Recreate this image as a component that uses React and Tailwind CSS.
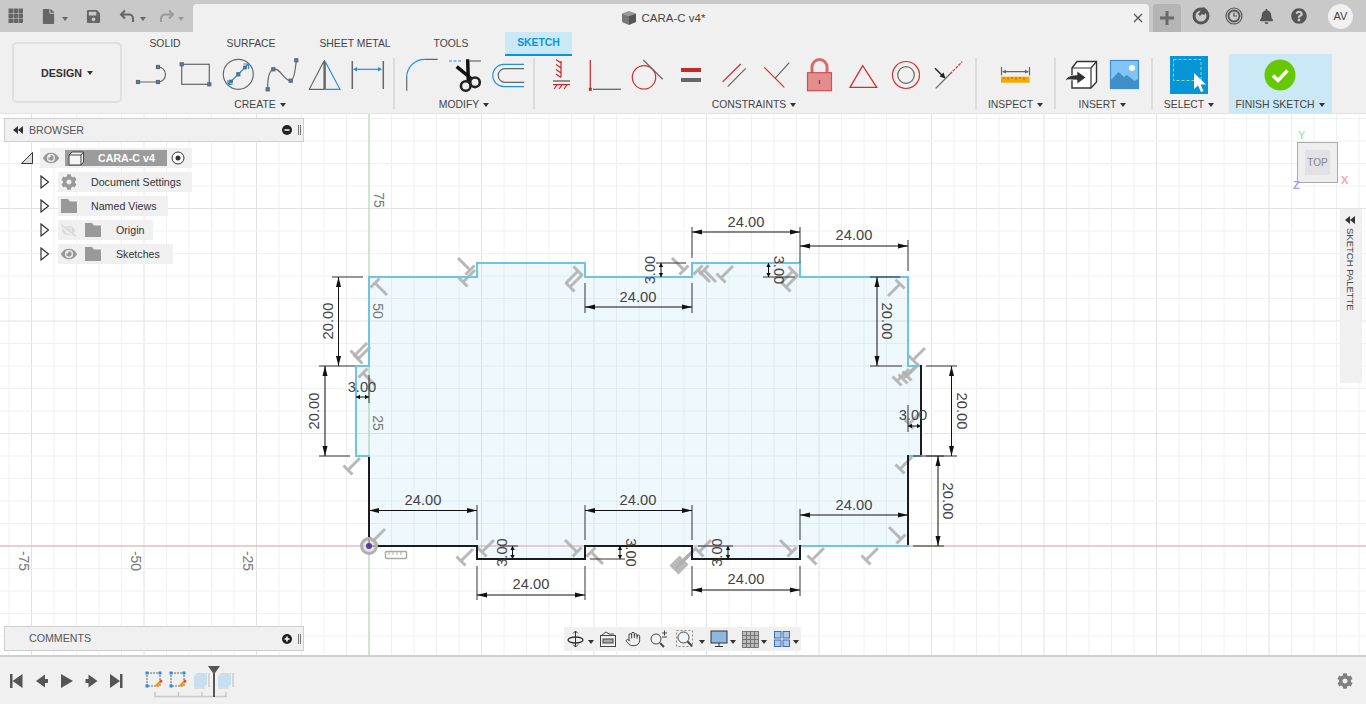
import { Hand } from 'lucide-react'
import { FaBell, FaCog, FaEye, FaEyeSlash, FaFile, FaQuestionCircle, FaSave } from 'react-icons/fa'

const Caret = ({ color = 'border-t-[#333]' }) => (
  <span className={`inline-block w-0 h-0 border-x-[3.5px] border-t-[4px] border-x-transparent ${color}`} />
)

const Dot = ({ x, y, s = 3 }) => <rect x={x - s / 2} y={y - s / 2} width={s} height={s} fill="#1e90e6" />

// toolbar icons, one 43x36 cell each
const Cell = ({ children }) => (
  <svg width="43" height="36" viewBox="0 0 43 36" fill="none" strokeWidth="1.2" stroke="#666" className="shrink-0">
    {children}
  </svg>
)

const createIcons = [
  <><path d="M7 25H27A7.5 7.5 0 0 0 27 10" /><Dot x={7} y={25} /><Dot x={27} y={25} /><Dot x={27} y={10} /></>,
  <><rect x="7.7" y="7.3" width="27.6" height="20" /><Dot x={7.7} y={7.3} /><Dot x={35.3} y={27.3} /></>,
  <><circle cx="21.3" cy="17.3" r="15" />
    <path d="M11.5 27 31 7.5M11 23v4.5h4.5M31.5 12V7h-5" stroke="#1e90e6" /><Dot x={21.3} y={17.3} /><Dot x={14} y={24.5} s={2.5} /><Dot x={28} y={10.5} s={2.5} /></>,
  <><path d="M7.7 32C7.5 22 9 14 13.3 12.3 20 10 24 24 30.7 23.7 34 23 35.5 12 36.3 3.3" /><Dot x={7.7} y={32.3} /><Dot x={13.3} y={12.3} /><Dot x={30.7} y={23.7} /><Dot x={36.3} y={3.3} /></>,
  <><path d="M21 4 6.3 32.3H21ZM21 4" /><path d="M22.3 4.7 37 32.3H22.3Z" stroke="#1e90e6" /><path d="M21.6 3V32.3" stroke="#666" /></>,
  <><path d="M6.3 4V32M37.3 4V32" strokeWidth="1.5" /><path d="M8 12.3H35" stroke="#1e90e6" /><path d="M7 12.3 11 10V14.6ZM36 12.3 32 10V14.6Z" fill="#1e90e6" stroke="none" /></>,
]

const modifyIcons = [
  <><path d="M6.7 20A18 18 0 0 1 25 2.3" stroke="#1e90e6" /><path d="M25 2.3H37.7M6.7 20V33.7" /></>,
  <><path d="M6 4H18" stroke="#1e90e6" strokeDasharray="3 1.5" /><path d="M27 4H38" />
    <path d="M13.7 9.7 28.7 22M24.7 2.3 25.3 25" stroke="#111" strokeWidth="3.5" />
    <circle cx="22.7" cy="29" r="4.8" stroke="#222" strokeWidth="2.6" /><circle cx="32" cy="25.3" r="4.8" stroke="#222" strokeWidth="2.6" /></>,
  <><path d="M38 7.3H18A11.2 11.2 0 0 0 18 29.7H38" stroke="#1e90e6" /><path d="M38 11.7H19A6.8 6.8 0 0 0 19 25.3H38" /></>,
]

const constraintIcons = [
  <><path d="M22 4V20M22 6 17 2.500M22 11 17 7.500M22 16 17 12.500M22 20.500 17 17" stroke="#c62828" /><path d="M14 24H31" strokeWidth="1.4" /><path d="M14 27.700H31M18 28l-3 4M23 28l-3 4M28 28l-3 4" stroke="#c62828" /></>,
  <><path d="M8.300 3V32" stroke="#c62828" /><path d="M11 32.300H39" strokeWidth="1.300" /><rect x="6.800" y="30.800" width="3" height="3" fill="#c62828" stroke="none" /></>,
  <><circle cx="19" cy="20.300" r="11.700" stroke="#d32f2f" /><path d="M18.300 3 37.700 22.300" /></>,
  <><rect x="13" y="11" width="20" height="4" fill="#c62828" stroke="none" /><rect x="13" y="21" width="20" height="4" fill="#666" stroke="none" /></>,
  <><path d="M11.700 24.700 29.700 7" stroke="#d32f2f" /><path d="M16.700 29.700 34.700 11.300" /></>,
  <><path d="M10.300 10.300 30.300 30.300" stroke="#d32f2f" /><path d="M21 21.300 35.300 5.700" /></>,
  <><path d="M15 16V10A7.500 7.500 0 0 1 30 10V16" stroke="#d86a6a" strokeWidth="3" /><rect x="10.500" y="15.700" width="24" height="18" fill="#e38d8d" stroke="#d05050" /><path d="M22.500 23V27" stroke="#9c3030" /></>,
  <path d="M22.700 8.700 10 30.300H36.700Z" stroke="#d32f2f" strokeWidth="1.300" />,
  <><circle cx="23" cy="18" r="13.500" stroke="#d32f2f" /><circle cx="23" cy="18" r="8.300" /></>,
  <><path d="M9.700 31.300 24 17" /><path d="M24 17 36.300 4.700" stroke="#d32f2f" strokeDasharray="3 1" /><path d="M9 11.300 17 19.300" stroke="#222" strokeWidth="1.500" /><path d="M19.500 21.500 13.500 19.500 17.500 15.500Z" fill="#222" stroke="none" /></>,
]

const inspectIcon = (
  <><path d="M7.500 10V18.500M35.500 10V18.500M9 14.700H34" /><path d="M8 14.700 12 12.800V16.600ZM35 14.700 31 12.800V16.600Z" fill="#666" stroke="none" />
    <rect x="7" y="19.700" width="28.500" height="6" fill="#f4a800" stroke="none" /><path d="M10 20V22M14 20V23M18 20V22M22 20V23M26 20V22M30 20V23" stroke="#a06a00" strokeWidth="0.800" /></>
)

const insertIcons = [
  <><path d="M12 11 17 4.500H36.500V25L31 31H12Z" fill="#fff" stroke="#333" strokeWidth="1.400" /><path d="M12 11H31V31M31 11 36.500 4.500" stroke="#333" strokeWidth="1.200" /><path d="M5 23.500C7 19 12 18 17 18V14L26 20.500 17 27V23C12 23 8 22 5 23.500Z" fill="#333" stroke="#fff" strokeWidth="0.700" /></>,
  <><rect x="7.500" y="3.500" width="28" height="28" fill="#82c4f7" stroke="#3a8fd0" /><circle cx="29" cy="11" r="3" fill="#fdf8d0" stroke="none" /><path d="M8 31V23L15.500 15 21 20 24 18 31.500 24 35 22V31Z" fill="#408fc9" stroke="none" /></>,
]

const Group = ({ label, className = '', children }) => (
  <div className={`flex flex-col items-center h-[57px] shrink-0 ${className}`}>
    <div className="flex h-[36px] mt-px">{children}</div>
    <div className="mt-[6px] flex items-center gap-[4px] text-[10.4px] leading-[11px] text-[#444]">
      {label}
      <Caret />
    </div>
  </div>
)

const Divider = () => <div className="w-[2px] h-[51px] mt-[2px] bg-[#dcdcdc] shrink-0" />

const Tab = ({ className, children }) => (
  <div className={`h-[24px] flex items-center justify-center text-[10.4px] text-[#444] ${className}`}>{children}</div>
)

function TopBar() {
  return (
    <div className="h-[32px] flex bg-[#c9c9c9] shrink-0">
      <div className="w-[193px] flex items-center text-[#666] shrink-0">
        <svg width="16" height="16" viewBox="0 0 16 16" fill="#666" className="ml-[8px]">
          {[1, 6, 11].flatMap((y) => [1, 6, 11].map((x) => <rect key={`${x}-${y}`} x={x - 0.5} y={y - 0.5} width="4.500" height="4.500" rx="0.500" />))}
        </svg>
        <FaFile size={15} className="ml-[17px]" />
        <span className="ml-[6px]"><Caret color="border-t-[#666]" /></span>
        <FaSave size={15} className="ml-[18px]" />
        <svg width="16" height="16" viewBox="0 0 16 16" fill="none" stroke="#666" strokeWidth="2" className="ml-[18px]">
          <path d="M6 2.500 2 6.500 6 10.500M2 6.500H10A4 4 0 0 1 14 10.500V14" />
        </svg>
        <span className="ml-[5px]"><Caret color="border-t-[#666]" /></span>
        <svg width="16" height="16" viewBox="0 0 16 16" fill="none" stroke="#9a9a9a" strokeWidth="2" className="ml-[13px]">
          <path d="M10 2.500 14 6.500 10 10.500M14 6.500H6A4 4 0 0 0 2 10.500V14" />
        </svg>
        <span className="ml-[3px]"><Caret color="border-t-[#999]" /></span>
      </div>
      <div className="relative mt-[4px] w-[956px] h-[28px] bg-[#f0f0f0] rounded-t-[4px] flex items-center justify-center gap-[5px] pr-[16px] shrink-0 text-[11.5px] text-[#444]">
        <svg width="16" height="16" viewBox="0 0 16 16">
          <path d="M1 3.500 8 1 15 3.500 8 6Z" fill="#999" />
          <path d="M1 3.500V12L8 15V6Z" fill="#777" />
          <path d="M15 3.500V12L8 15V6Z" fill="#555" />
        </svg>
        <span className="pt-px">CARA-C v4*</span>
        <svg width="10" height="10" viewBox="0 0 10 10" stroke="#555" strokeWidth="1.300" className="absolute right-[6px] top-[9px]">
          <path d="M1 1 9 9M9 1 1 9" />
        </svg>
      </div>
      <div className="ml-[4px] mt-[4px] w-[28px] h-[28px] bg-[#b5b5b5] rounded-t-[3px] flex items-center justify-center shrink-0">
        <svg width="14" height="14" viewBox="0 0 14 14" fill="#6a6a6a"><path d="M5.500 0h3v5.500H14v3H8.500V14h-3V8.500H0v-3h5.500Z" /></svg>
      </div>
      <div className="flex items-center ml-[11px] text-[#555]">
        <svg width="18" height="18" viewBox="0 0 18 18" className="shrink-0">
          <circle cx="9" cy="9" r="7" fill="none" stroke="#555" strokeWidth="3" />
          <path d="M9 2 12 0 16 4 12 8 10 7 8 9 6 7 8 5Z" fill="#555" />
        </svg>
        <svg width="18" height="18" viewBox="0 0 18 18" fill="none" stroke="#555" className="ml-[15px] shrink-0">
          <circle cx="9" cy="9" r="8" strokeWidth="1.200" />
          <circle cx="9" cy="9" r="5.500" strokeWidth="1.800" />
          <path d="M9 5.500V9H12" strokeWidth="1.200" />
        </svg>
        <FaBell size={15} className="ml-[16px]" />
        <FaQuestionCircle size={16} className="ml-[17px]" />
        <div className="ml-[21px] w-[25px] h-[25px] rounded-full bg-[#f0f0f0] flex items-center justify-center text-[11px] text-[#444]">AV</div>
      </div>
    </div>
  )
}

function Toolbar() {
  return (
    <div className="h-[82px] flex bg-[#f0f0f0] border-b border-[#e2e2e2] shrink-0">
      <div className="w-[131px] shrink-0 pl-[12px] pt-[10px]">
        <div className="w-[110px] h-[61px] border-2 border-[#dfdfdf] rounded-[5px] flex items-center justify-center gap-[5px] text-[10.67px] font-bold text-[#333]">
          DESIGN <Caret />
        </div>
      </div>
      <div className="w-[1098px] shrink-0 flex flex-col">
        <div className="flex -ml-[9px]">
          <Tab className="w-[86px]">SOLID</Tab>
          <Tab className="w-[86px]">SURFACE</Tab>
          <Tab className="w-[122px]">SHEET METAL</Tab>
          <Tab className="w-[70px]">TOOLS</Tab>
          <Tab className="ml-[19px] w-[67px] bg-[#cbe8f6] border-b-2 border-[#0696d7] text-[#0696d7] font-bold">SKETCH</Tab>
        </div>
        <div className="flex">
          <Group label="CREATE" className="w-[258px] mr-[4px]">
            {createIcons.map((icon, i) => <Cell key={i}>{icon}</Cell>)}
          </Group>
          <Divider />
          <Group label="MODIFY" className="w-[138px]">
            {modifyIcons.map((icon, i) => <Cell key={i}>{icon}</Cell>)}
          </Group>
          <Divider />
          <Group label="CONSTRAINTS" className="w-[438px] mr-[2px]">
            {constraintIcons.map((icon, i) => <Cell key={i}>{icon}</Cell>)}
          </Group>
          <Divider />
          <Group label="INSPECT" className="w-[77px]"><Cell>{inspectIcon}</Cell></Group>
          <Divider />
          <Group label="INSERT" className="w-[93px] mr-[2px]">
            {insertIcons.map((icon, i) => <Cell key={i}>{icon}</Cell>)}
          </Group>
          <Divider />
          <Group label="SELECT" className="w-[72px]">
            <svg width="38" height="38" viewBox="0 0 38 38" className="-mt-px shrink-0">
              <rect width="38" height="38" fill="#0696d7" />
              <rect x="3.500" y="3.500" width="27.500" height="21" fill="none" stroke="#8fe08f" strokeDasharray="3 2" />
              <path d="M24 17V33L28 29.500 31 36 33.500 35 30.500 28.500H36Z" fill="#fff" />
            </svg>
          </Group>
        </div>
      </div>
      <div className="w-[103px] h-[59px] mt-[22px] pr-px bg-[#cbe8f6] flex flex-col items-center shrink-0">
        <svg width="32" height="32" viewBox="0 0 32 32" className="mt-[5px] shrink-0">
          <circle cx="16" cy="16" r="15.500" fill="#66c800" />
          <path d="M9 16.500 14 21.500 23.500 11.500" fill="none" stroke="#fff" strokeWidth="3.500" />
        </svg>
        <div className="mt-[8px] flex items-center gap-[4px] text-[10.4px] leading-[11px] text-[#444]">
          FINISH SKETCH <Caret />
        </div>
      </div>
    </div>
  )
}

const FolderIcon = ({ className = '' }) => (
  <svg width="16" height="14" viewBox="0 0 16 14" fill="#999" className={`shrink-0 ${className}`}>
    <path d="M0 0H7L9 2.500H16V14H0Z" />
  </svg>
)

const TreeArrow = () => (
  <svg width="10" height="14" viewBox="0 0 10 14" fill="none" stroke="#333" strokeWidth="1.200" className="shrink-0 ml-[36px] mr-[8px]">
    <path d="M1 1 8.500 7 1 13Z" />
  </svg>
)

const TreeRow = ({ width, children }) => (
  <div className="flex items-center h-[20px]">
    <TreeArrow />
    <div className={`flex items-center h-[20px] bg-[#f0f0f0] text-[10.67px] text-[#333] ${width}`}>{children}</div>
  </div>
)

function BrowserPanel() {
  return (
    <div className="absolute left-[4px] top-[4px] w-[300px]">
      <div className="h-[24px] bg-[#f0f0f0] border border-[#cfcfcf] flex items-center text-[10.67px] text-[#555]">
        <span className="w-[24px] flex justify-center pl-[2px]">
          <svg width="10" height="8" viewBox="0 0 10 8" fill="#333"><path d="M5 0V8L0 4ZM10 0V8L5 4Z" /></svg>
        </span>
        BROWSER
        <svg width="10" height="10" viewBox="0 0 10 10" className="ml-auto"><circle cx="5" cy="5" r="5" fill="#222" /><path d="M2.500 5H7.500" stroke="#fff" strokeWidth="1.500" /></svg>
        <span className="ml-[6px] mr-[2px] w-[3px] h-[10px] border-x border-[#777]" />
      </div>
      <div className="mt-[6px] flex flex-col gap-[4px]">
        <div className="flex items-center h-[20px]">
          <svg width="12" height="12" viewBox="0 0 12 12" className="ml-[17px] mr-[7px] shrink-0">
            <path d="M0.500 11.500 11.500 0.500V11.500Z" fill="#ddd" stroke="#333" />
          </svg>
          <div className="w-[152px] h-[20px] bg-[#f0f0f0] flex items-center">
            <FaEye size={16} className="ml-[3px] text-[#999] shrink-0" />
            <div className="ml-[6px] w-[102px] h-[16px] bg-[#9b9b9b] flex items-center">
              <svg width="17" height="15" viewBox="0 0 17 15" className="ml-[3px] shrink-0">
                <path d="M1 4 4 1H15.500V11L13 14H1Z" fill="#f4f4f4" stroke="#444" />
                <path d="M1 4H13V14M13 4 15.500 1" fill="none" stroke="#444" />
              </svg>
              <span className="ml-[13px] text-[10.67px] font-bold text-white whitespace-nowrap">CARA-C v4</span>
            </div>
            <svg width="14" height="14" viewBox="0 0 14 14" className="ml-[4px] shrink-0">
              <circle cx="7" cy="7" r="6" fill="#fff" stroke="#333" />
              <circle cx="7" cy="7" r="2.500" fill="#333" />
            </svg>
          </div>
        </div>
        <TreeRow width="w-[134px]">
          <FaCog size={16} className="ml-[3px] text-[#999] shrink-0" />
          <span className="ml-[14px]">Document Settings</span>
        </TreeRow>
        <TreeRow width="w-[110px]">
          <FolderIcon className="ml-[3px]" />
          <span className="ml-[14px]">Named Views</span>
        </TreeRow>
        <TreeRow width="w-[95px]">
          <FaEyeSlash size={15} className="ml-[3px] text-[#d8d8d8] shrink-0" />
          <FolderIcon className="ml-[9px]" />
          <span className="ml-[15px]">Origin</span>
        </TreeRow>
        <TreeRow width="w-[115px]">
          <FaEye size={16} className="ml-[3px] text-[#999] shrink-0" />
          <FolderIcon className="ml-[8px]" />
          <span className="ml-[15px]">Sketches</span>
        </TreeRow>
      </div>
    </div>
  )
}

function CommentsPanel() {
  return (
    <div className="absolute left-[4px] top-[512px] w-[300px] h-[25px] bg-[#f0f0f0] border border-[#cfcfcf] flex items-center text-[10.67px] text-[#555]">
      <span className="ml-[24px] pb-px">COMMENTS</span>
      <svg width="10" height="10" viewBox="0 0 10 10" className="ml-auto"><circle cx="5" cy="5" r="5" fill="#222" /><path d="M2.500 5H7.500M5 2.500V7.500" stroke="#fff" strokeWidth="1.500" /></svg>
      <span className="ml-[6px] mr-[2px] w-[3px] h-[10px] border-x border-[#777]" />
    </div>
  )
}

function NavBar() {
  return (
    <div className="absolute left-[564px] top-[513px] w-[237px] h-[24px] bg-[#f0f0f0] flex items-center pl-[3px] text-[#444]">
      <svg width="17" height="18" viewBox="0 0 17 18" fill="none" stroke="#333" className="shrink-0">
        <path d="M8.500 1V17M6 3.500 8.500 1 11 3.500M6 14.500 8.500 17 11 14.500" />
        <ellipse cx="8.500" cy="10" rx="7.500" ry="3" strokeWidth="1.300" />
      </svg>
      <span className="ml-[4px]"><Caret /></span>
      <svg width="18" height="16" viewBox="0 0 18 16" fill="none" stroke="#444" className="ml-[5px] shrink-0">
        <rect x="1.500" y="4.500" width="15" height="11" />
        <rect x="4" y="8" width="10" height="4" fill="#aaa" />
        <path d="M3 4 7 1 10 3H15" />
      </svg>
      <Hand size={16} strokeWidth={1.400} className="ml-[8px] text-[#333] shrink-0" />
      <svg width="20" height="18" viewBox="0 0 20 18" fill="none" stroke="#444" className="ml-[8px] shrink-0">
        <circle cx="7" cy="9" r="5" fill="#eef6fb" />
        <path d="M11 13 15 17" strokeWidth="2" />
        <path d="M13 3H18M15.500 0.500V5.500M13 7H18" />
      </svg>
      <svg width="18" height="18" viewBox="0 0 18 18" fill="none" stroke="#444" className="ml-[7px] shrink-0">
        <rect x="0.500" y="0.500" width="16" height="16" strokeDasharray="2 2" stroke="#888" />
        <circle cx="7.500" cy="7.500" r="5.500" fill="#eef6fb" />
        <path d="M11.500 11.500 16 16" strokeWidth="2" />
      </svg>
      <span className="ml-[5px]"><Caret /></span>
      <svg width="18" height="18" viewBox="0 0 18 18" className="ml-[5px] shrink-0">
        <rect x="1" y="1" width="16" height="12" fill="#8fb8e0" stroke="#333" />
        <path d="M9 13V16M5 16.500H13" stroke="#333" />
      </svg>
      <span className="ml-[2px]"><Caret /></span>
      <svg width="17" height="17" viewBox="0 0 17 17" fill="#ddd" stroke="#666" strokeWidth="0.800" className="ml-[6px] shrink-0">
        <rect x="0.500" y="0.500" width="16" height="16" fill="#bbb" />
        <path d="M4.500 0V17M8.500 0V17M12.500 0V17M0 4.500H17M0 8.500H17M0 12.500H17" />
      </svg>
      <span className="ml-[2px]"><Caret /></span>
      <svg width="16" height="16" viewBox="0 0 16 16" fill="#a9c8ea" stroke="#3f6fa8" className="ml-[7px] shrink-0">
        <rect x="0.500" y="0.500" width="6.500" height="6.500" /><rect x="9" y="0.500" width="6.500" height="6.500" />
        <rect x="0.500" y="9" width="6.500" height="6.500" /><rect x="9" y="9" width="6.500" height="6.500" />
      </svg>
      <span className="ml-[3px]"><Caret /></span>
    </div>
  )
}

function ViewCube() {
  return (
    <div className="absolute left-[1297px] top-[28px] w-[41px] h-[41px] bg-[#eeeeee] border border-[#aaa] flex items-center justify-center">
      <div className="w-[25px] h-[25px] bg-[#e2e2e6] flex items-center justify-center text-[10px] text-[#85858f]">TOP</div>
      <span className="absolute -top-[14px] left-[0px] text-[11px] leading-[12px] font-bold text-[#a8eca8]">Y</span>
      <span className="absolute top-[31px] left-[43px] text-[11px] leading-[12px] font-bold text-[#f5a8a8]">X</span>
      <span className="absolute top-[36px] -left-[5px] text-[11px] leading-[12px] font-bold text-[#a0a0f0]">Z</span>
    </div>
  )
}

function SketchPalette() {
  return (
    <div className="absolute left-[1340px] top-[95px] w-[22px] h-[174px] bg-[#f0f0f0] flex flex-col items-center pt-[7px] pr-[2px]">
      <svg width="10" height="8" viewBox="0 0 10 8" fill="#333" className="shrink-0"><path d="M5 0V8L0 4ZM10 0V8L5 4Z" /></svg>
      <span className="mt-[4px] [writing-mode:vertical-rl] text-[9.5px] leading-[11px] text-[#444] whitespace-nowrap">SKETCH PALETTE</span>
    </div>
  )
}

const BLUE = '#6fc3e6'
const BLACK = '#1c1c1c'

const outline = [
  [BLACK, 'M369 546V456'],
  [BLUE, 'M369 456H356V366H369V277H477V263H585V277H692V263H800V277H908V366H921'],
  [BLACK, 'M921 366V456'],
  [BLUE, 'M921 456H908'],
  [BLACK, 'M908 456V546'],
  [BLUE, 'M908 546H800'],
  [BLACK, 'M800 546V559H692V546H585V559H477V546H369'],
]

// extension lines of the dimensions
const extLines = [
  [692, 227, 692, 258], [800, 227, 800, 263], [908, 240, 908, 271],
  [692, 283, 692, 313], [585, 283, 585, 313],
  [332, 277, 363, 277], [319, 366, 355, 366], [319, 456, 350, 456],
  [369, 375, 369, 403], [870, 277, 900, 277], [870, 366, 902, 366],
  [926, 366, 957, 366], [926, 456, 957, 456], [913, 456, 944, 456], [913, 546, 944, 546],
  [908, 405, 908, 432], [656, 263, 686, 263], [763, 277, 795, 277],
  [477, 505, 477, 540], [585, 505, 585, 540], [692, 505, 692, 540],
  [800, 509, 800, 540], [477, 566, 477, 600], [585, 566, 585, 600],
  [692, 566, 692, 596], [800, 566, 800, 596],
  [500, 546, 518, 546], [590, 559, 625, 559], [698, 546, 733, 546],
]

// [x1, y1, x2, y2, label x, label y, rotation]
const dimensions = [
  [692, 232, 800, 232, 746, 222, 0],
  [800, 246, 908, 246, 854, 235, 0],
  [585, 307, 692, 307, 638, 297, 0],
  [338.5, 277, 338.5, 366, 328, 321, -90],
  [325, 366, 325, 456, 314, 411, -90],
  [356, 397, 369, 397, 362, 387, 0],
  [877, 277, 877, 366, 887, 321, 90],
  [951.5, 366, 951.5, 456, 962, 411, 90],
  [938, 456, 938, 546, 948, 501, 90],
  [908, 426, 921, 426, 913, 415, 0],
  [661, 263, 661, 277, 650, 270, -90],
  [768.5, 263, 768.5, 277, 779, 270, 90],
  [369, 510.5, 477, 510.5, 423, 500, 0],
  [585, 510.5, 692, 510.5, 638, 500, 0],
  [800, 515, 908, 515, 854, 505, 0],
  [477, 595, 585, 595, 531, 584, 0],
  [692, 590, 800, 590, 746, 579, 0],
  [512.5, 546, 512.5, 559, 502, 552.5, -90],
  [620, 546, 620, 559, 631, 552.5, 90],
  [728, 546, 728, 559, 717, 552.5, -90],
]

const dirs = { NE: [1, -1], NW: [-1, -1], SE: [1, 1], SW: [-1, 1] }

// constraint glyphs: junction x, y and stem direction
const tees = [
  [375, 283, 'SE'], [470, 270, 'NW'], [463, 282, 'NE'], [570, 287, 'NE'], [578, 271, 'SW'],
  [355, 355, 'NE'], [358, 359, 'NE'], [363, 373, 'SE'], [348, 470, 'NE'],
  [684, 270, 'NW'], [698, 270, 'SE'], [704, 270, 'SE'], [721, 278, 'NE'], [786, 287, 'NE'], [793, 271, 'SW'],
  [900, 284, 'SW'], [913, 360, 'NE'], [897, 381, 'NE'], [903, 379, 'NE'], [907, 376, 'NE'], [909, 424, 'NE'],
  [373, 541, 'NE'], [461, 561, 'NE'], [482, 552, 'NE'], [577, 552, 'NW'], [591, 552, 'SE'],
  [675, 569, 'NE'], [677, 567, 'NE'], [679, 565, 'NE'], [681, 563, 'NE'], [683, 561, 'NE'],
  [699, 552, 'NE'], [792, 552, 'NW'], [812, 560, 'NE'], [866, 560, 'NE'], [901, 539, 'NW'], [900, 469, 'NE'],
]

const axisLabels = [
  [379, 200, '75'], [378, 311, '50'], [378, 423, '25'],
  [24, 561, '-75'], [136, 561, '-50'], [248, 561, '-25'],
]

function Arrow({ x, y, dx, dy, len }) {
  const w = len >= 8 ? 2.5 : 2.2
  const px = -dy * w
  const py = dx * w
  return <path d={`M${x} ${y}L${x - dx * len + px} ${y - dy * len + py}L${x - dx * len - px} ${y - dy * len - py}Z`} fill="#111" />
}

function Sketch() {
  const verticals = []
  for (let k = -16; k <= 44; k++) verticals.push(369 + k * 22.5)
  const horizontals = []
  for (let k = -4; k <= 20; k++) horizontals.push(546 - k * 22.5)

  return (
    <svg viewBox="0 114 1366 541" className="absolute inset-0 w-full h-full" fontFamily="'Liberation Sans', Arial, sans-serif">
      {verticals.map((x, i) => (
        <line key={i} x1={x} y1="114" x2={x} y2="656" stroke={(i - 16) % 5 === 0 ? '#e2e2e2' : '#f0f0f0'} />
      ))}
      {horizontals.map((y, i) => (
        <line key={i} x1="0" y1={y} x2="1366" y2={y} stroke={(i - 4) % 5 === 0 ? '#e2e2e2' : '#f0f0f0'} />
      ))}
      <line x1="369" y1="114" x2="369" y2="656" stroke="#a8dfa8" />
      <line x1="0" y1="546" x2="1366" y2="546" stroke="#e8aaaa" />

      <path
        d="M369 546V456H356V366H369V277H477V263H585V277H692V263H800V277H908V366H921V456H908V546H800V559H692V546H585V559H477V546Z"
        fill="#8fcdf0"
        fillOpacity="0.14"
      />

      {axisLabels.map(([x, y, t]) => (
        <text key={t} x={x} y={y} fontSize="14" fill="#777" textAnchor="middle" dominantBaseline="central" transform={`rotate(90 ${x} ${y})`}>{t}</text>
      ))}

      {tees.map(([x, y, d], i) => {
        const [dx, dy] = dirs[d]
        const s = 12
        const c = 4.5
        return (
          <path
            key={i}
            d={`M${x} ${y}L${x + dx * s} ${y + dy * s}M${x - dy * c} ${y + dx * c}L${x + dy * c} ${y - dx * c}`}
            stroke="#b0b0b0"
            strokeWidth="3"
            fill="none"
            strokeOpacity="0.900"
          />
        )
      })}

      {outline.map(([color, d], i) => (
        <path key={i} d={d} fill="none" stroke={color} strokeWidth="2" strokeLinecap="square" />
      ))}

      {extLines.map(([x1, y1, x2, y2], i) => (
        <line key={i} x1={x1} y1={y1} x2={x2} y2={y2} stroke="#333" />
      ))}

      {dimensions.map(([x1, y1, x2, y2, tx, ty, rot], i) => {
        const horizontal = y1 === y2
        const span = horizontal ? x2 - x1 : y2 - y1
        const len = span < 20 ? 4 : 10
        return (
          <g key={i}>
            <line x1={x1} y1={y1} x2={x2} y2={y2} stroke="#111" />
            {horizontal ? (
              <>
                <Arrow x={x1} y={y1} dx={-1} dy={0} len={len} />
                <Arrow x={x2} y={y2} dx={1} dy={0} len={len} />
              </>
            ) : (
              <>
                <Arrow x={x1} y={y1} dx={0} dy={-1} len={len} />
                <Arrow x={x2} y={y2} dx={0} dy={1} len={len} />
              </>
            )}
            <text
              x={tx}
              y={ty}
              fontSize="14.700"
              fill="#444"
              textAnchor="middle"
              dominantBaseline="central"
              transform={rot ? `rotate(${rot} ${tx} ${ty})` : undefined}
            >
              {span < 20 ? '3.00' : span < 100 ? '20.00' : '24.00'}
            </text>
          </g>
        )
      })}

      <circle cx="369" cy="546" r="7.500" fill="#dcdcdc" fillOpacity="0.700" stroke="#b0b0b0" strokeWidth="3" />
      <circle cx="369" cy="546" r="3" fill="#5b3a9e" />
      <rect x="385.500" y="551.500" width="21" height="7" fill="none" stroke="#aaa" strokeWidth="1.500" rx="1" />
      <path d="M389 552V555M393 552V555M397 552V555M401 552V555" stroke="#aaa" />
    </svg>
  )
}

function Timeline() {
  return (
    <div className="h-[49px] bg-[#f0f0f0] border-t-2 border-[#cfcfcf] flex items-center shrink-0">
      <div className="flex items-center ml-[4px]">
        {[
          'M0 1V15H2.500V1ZM12.500 1 2.500 8 12.500 15Z',
          'M1 8 10 1.500V14.500ZM10 6H13V10H10Z',
          'M1 1 13 8 1 15Z',
          'M12.500 8 3.500 1.500V14.500ZM0.500 6H3.500V10H0.500Z',
          'M12.500 1V15H10V1ZM0 1 10 8 0 15Z',
        ].map((d, i) => (
          <svg key={i} width="25" height="16" viewBox="-6 0 25 16" fill="#555" className="shrink-0">
            <path d={d} />
          </svg>
        ))}
      </div>
      <svg width="100" height="46" viewBox="141 658 100 46" className="ml-[12px] shrink-0">
        {[147, 171].map((x) => (
          <g key={x}>
            <rect x={x} y="673" width="13" height="13" fill="none" stroke="#666" strokeDasharray="2 1" />
            <rect x={x - 1.500} y="671.500" width="3" height="3" fill="#1e90e6" />
            <rect x={x + 11.500} y="671.500" width="3" height="3" fill="#1e90e6" />
            <rect x={x - 1.500} y="684.500" width="3" height="3" fill="#1e90e6" />
            <path d={`M${x + 9} 686L${x + 14} 681`} stroke="#f39c12" strokeWidth="2.500" />
            <circle cx={x + 14} cy="681" r="1.500" fill="#e74c3c" />
          </g>
        ))}
        {[194, 218].map((x) => (
          <g key={x}>
            <path d={`M${x} 676 ${x + 3} 673H${x + 13}V684L${x + 10} 687H${x}Z`} fill="#c8dfef" />
            <path d={`M${x} 688H${x + 11}`} stroke="#ddd" strokeWidth="2" />
            <path d={`M${x + 15} 673V687`} stroke="#bbb" />
          </g>
        ))}
        <path d="M155 692V696.500H226V692M178.500 692V696.500M202 692V696.500" fill="none" stroke="#c8c8c8" strokeWidth="1.500" />
        <path d="M208 666H220L215 673V697H213V673Z" fill="#555" />
      </svg>
      <FaCog size={16} className="ml-auto mr-[13px] text-[#808080]" />
    </div>
  )
}

export default function App() {
  return (
    <div className="w-[1366px] h-[704px] flex flex-col overflow-hidden bg-white [font-family:'Liberation_Sans',Arial,sans-serif]">
      <TopBar />
      <Toolbar />
      <div className="relative flex-1 overflow-hidden">
        <Sketch />
        <BrowserPanel />
        <CommentsPanel />
        <NavBar />
        <ViewCube />
        <SketchPalette />
      </div>
      <Timeline />
    </div>
  )
}
